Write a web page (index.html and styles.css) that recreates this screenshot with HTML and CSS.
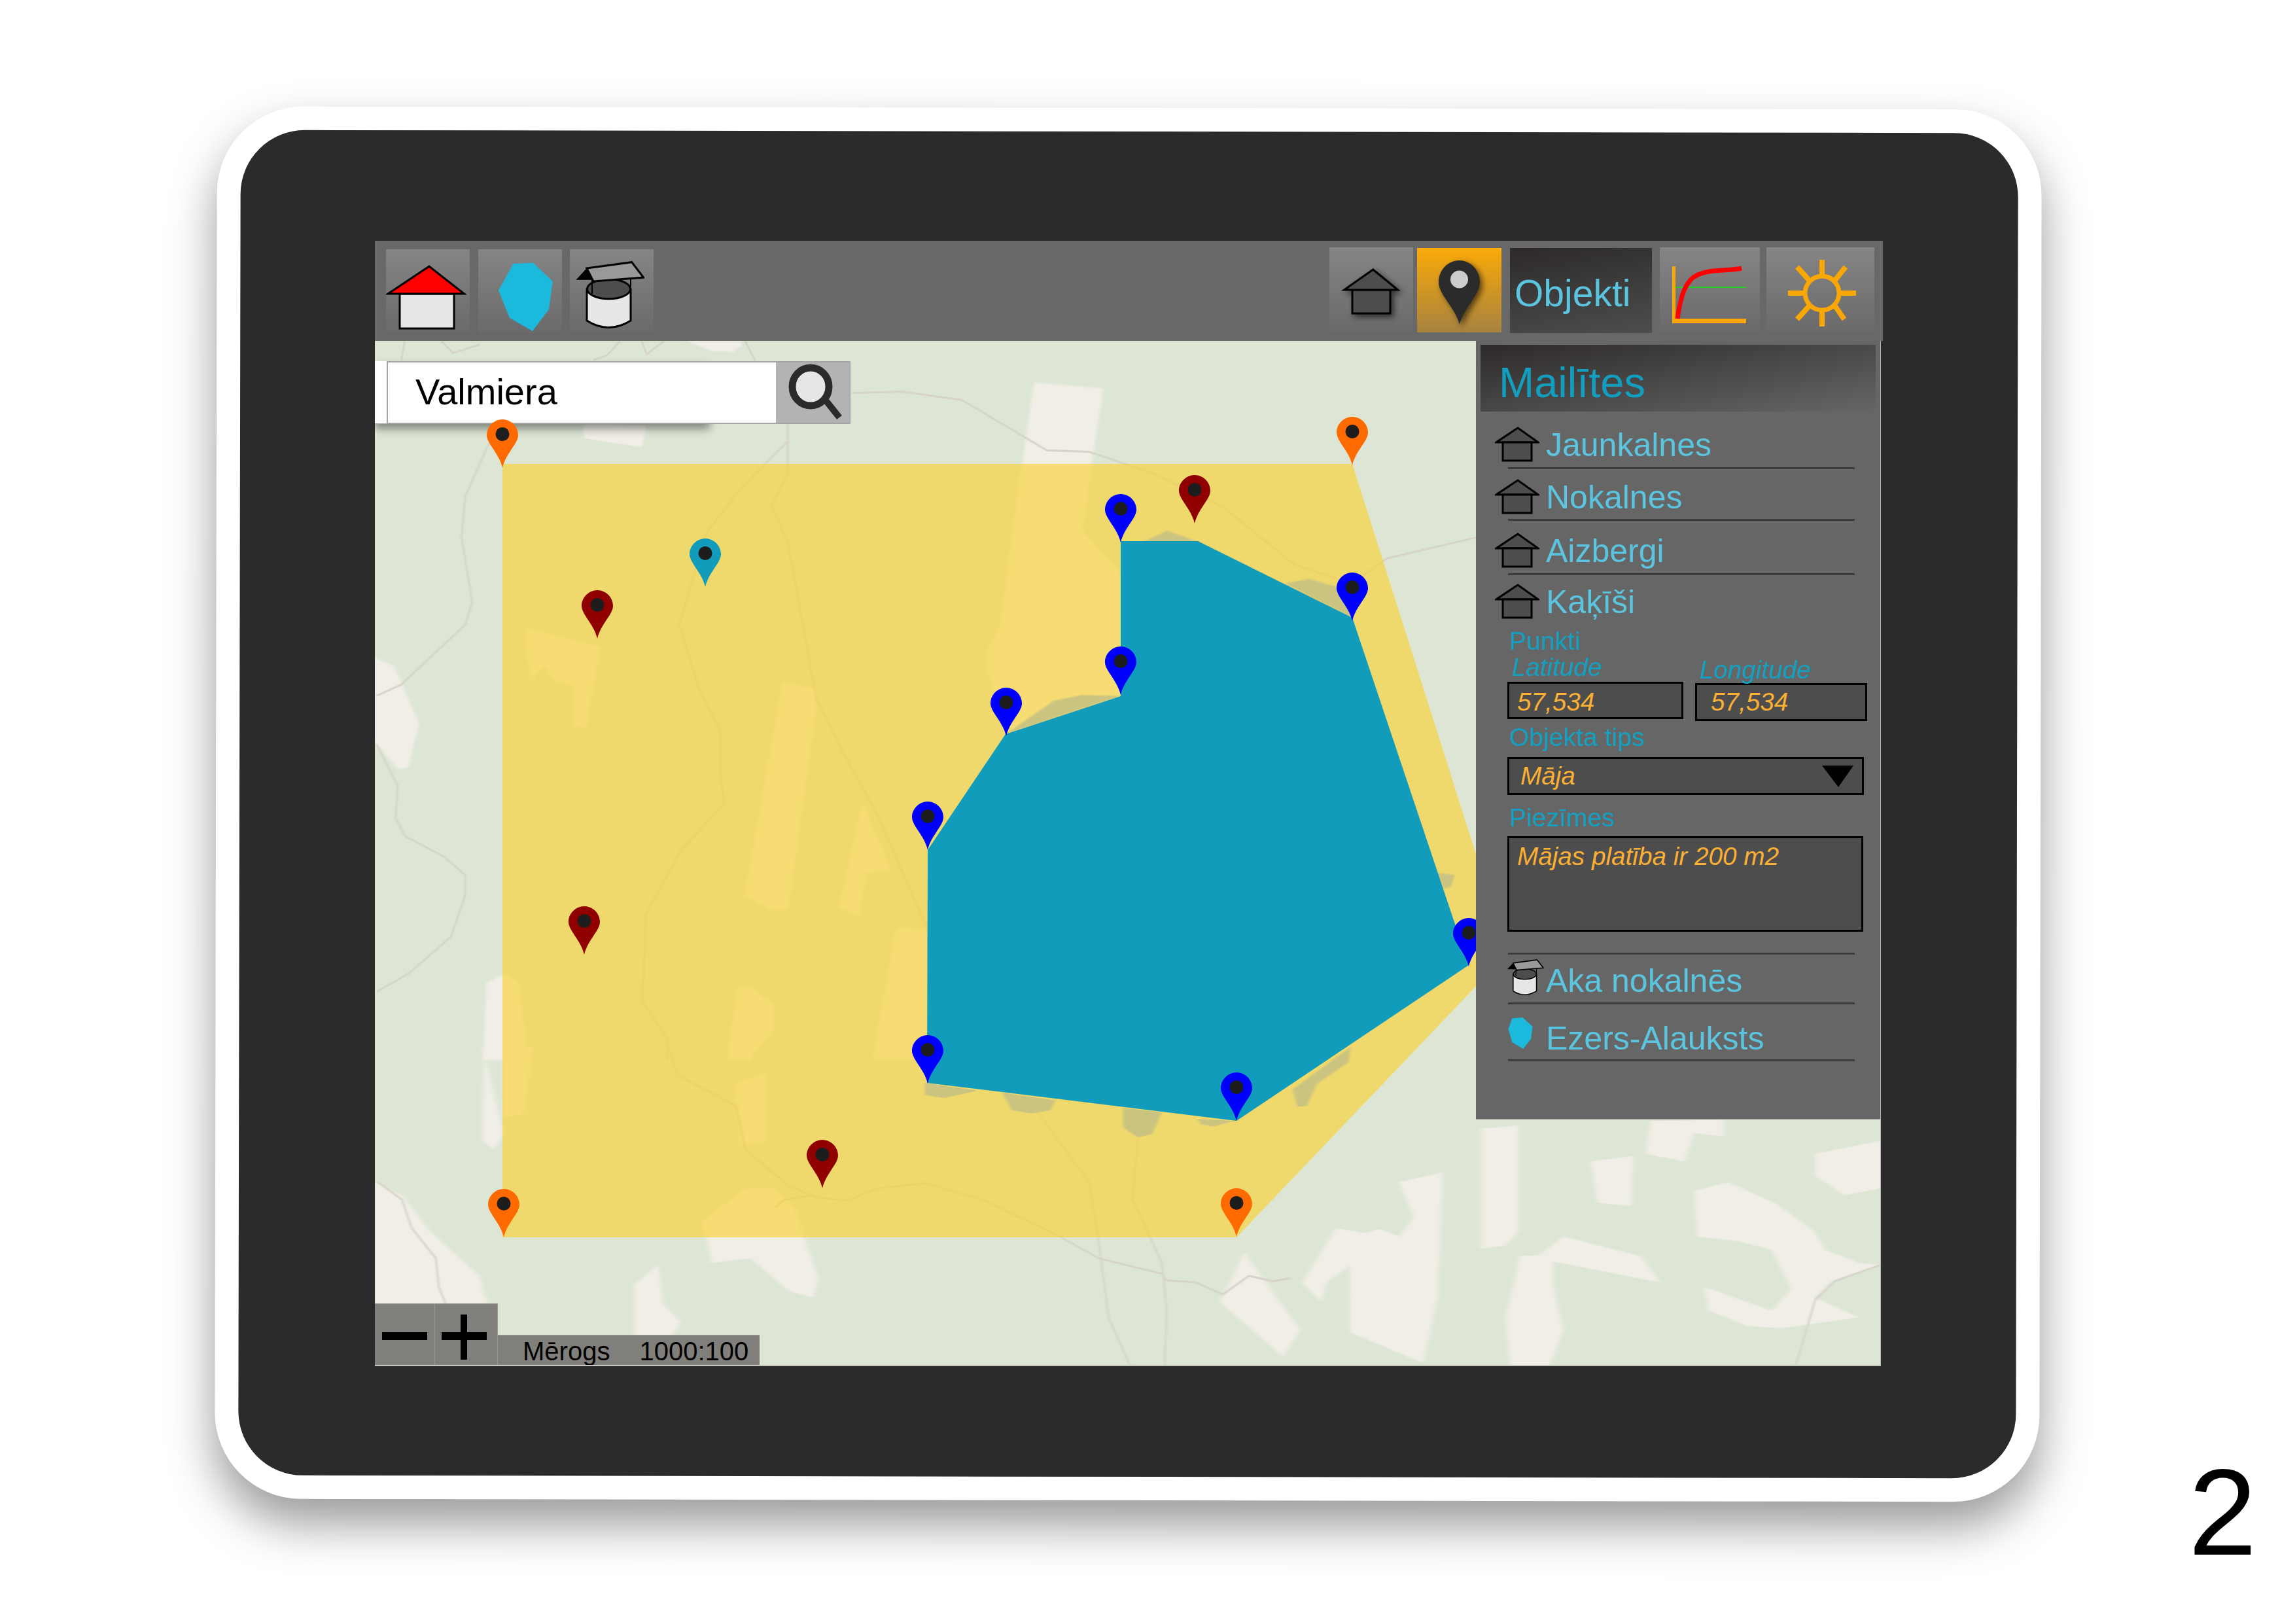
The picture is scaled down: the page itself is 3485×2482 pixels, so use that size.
FILE: index.html
```html
<!DOCTYPE html>
<html lang="en">

<head>
    <meta charset="UTF-8">
    <title>Mailītes</title>
    <link rel="stylesheet" href="styles.css">
</head>

<body>
    <svg class="defs" width="0" height="0">
        <symbol id="pin" viewBox="0 0 48 74">
            <path d="M24 0C37 0 48 11 48 24C48 37 29 52 24 74C19 52 0 37 0 24C0 11 11 0 24 0Z" />
            <circle cx="24" cy="22.500" r="10.500" fill="#1d1d1d" />
        </symbol>
        <symbol id="house" viewBox="0 0 68 54">
            <polygon points="35,2 2,24 66,24" fill="#4d4d4d" stroke="#000" stroke-width="3" />
            <rect x="12" y="24" width="44" height="28" fill="#4d4d4d" stroke="#000" stroke-width="3" />
        </symbol>
        <symbol id="well" viewBox="8 18 106 103">
            <path d="M26 61V109Q59 130 93 109V61Z" fill="#e6e6e6" stroke="#000" stroke-width="3" />
            <ellipse cx="59.500" cy="60.700" rx="33" ry="15" fill="#4d4d4d" stroke="#000" stroke-width="3" />
            <path d="M34 47V68M93 44V61" stroke="#000" stroke-width="2" fill="none" />
            <polygon points="25.800,29 9.400,46.700 36,46.700" fill="#000" />
            <polygon points="25.800,29 94.600,19.700 112.500,43 36,49" fill="#999" stroke="#000" stroke-width="3" />
        </symbol>
    </svg>

    <div class="tablet">
        <div class="bezel">
            <div class="screen">
                <div class="toolbar">
                    <div class="tool">
                        <svg width="128" height="128">
                            <rect x="21" y="68" width="83" height="53" fill="#e6e6e6" stroke="#000" stroke-width="3" />
                            <polygon points="66,26 3,68 119.500,68" fill="#f00" stroke="#000" stroke-width="3" />
                        </svg>
                    </div>
                    <div class="tool tool-lake">
                        <svg width="128" height="128">
                            <polygon points="53.500,22 84,20.700 113.700,49 108,91.700 83,125 48,105 31,63" fill="#1bb9dc" />
                        </svg>
                    </div>
                    <div class="tool">
                        <svg width="128" height="128" viewBox="0 0 128 128">
                            <use href="#well" x="8" y="18" width="106" height="103" />
                        </svg>
                    </div>

                    <div class="tool-right">
                        <div class="tool tool-home">
                            <svg class="soft" width="128" height="129">
                                <rect x="35" y="65" width="58" height="36" fill="#4d4d4d" stroke="#000" stroke-width="3" />
                                <polygon points="66.700,34 22.500,65 104.600,65" fill="#4d4d4d" stroke="#000" stroke-width="3" />
                            </svg>
                        </div>
                        <div class="tool tool-active">
                            <svg class="soft" width="129" height="129">
                                <path d="M64.500 19C82 19 96 34 96 52C96 72 72 90 65 117C58 90 33 72 33 52C33 34 47 19 64.500 19Z" fill="#2b2b2b" />
                                <ellipse cx="64.500" cy="48" rx="13.500" ry="13.500" fill="#ccc" />
                            </svg>
                        </div>
                        <div class="tool-title">Objekti</div>
                        <div class="tool tool-graph">
                            <svg width="153" height="129">
                                <rect x="19" y="29" width="5" height="87" fill="#f9a607" />
                                <rect x="19" y="109" width="113" height="7" fill="#f9a607" />
                                <rect x="24" y="60" width="108" height="2" fill="#2ec52e" />
                                <path d="M27 109C32 72 40 50 58 42C78 33 100 37 125 32" fill="none" stroke="#f00" stroke-width="7" />
                            </svg>
                        </div>
                        <div class="tool tool-sun">
                            <svg width="165" height="129" viewBox="-85 -70 165 129">
                                <circle r="26" fill="none" stroke="#f9a607" stroke-width="7" />
                                <path d="M0 -28V-51M0 28V51M-28 0H-52M28 0H52M-20 -20L-38 -40M20 -20L36 -40M-20 20L-38 40M20 20L34 40" stroke="#f9a607" stroke-width="8" fill="none" />
                            </svg>
                        </div>
                    </div>
                </div>

                <div class="map">
                    <svg class="map-layer" viewBox="573 521 2302 1567" width="2302" height="1567">
                        <rect x="573" y="521" width="2302" height="1567" fill="#dde6d5" />

                        <g class="land" transform="translate(570 520) scale(1.0842 .7015)">
                            <polygon points="932,92 1030,105 1010,300 1000,415 1054,510 1054,770 900,860 868,730 868,670 885,620 915,270" />
                            <polygon points="215,628 320,668 300,845 285,840 283,750 260,745 240,708 222,745" />
                            <polygon points="578,745 625,760 625,790 585,1240 560,1240 525,1210" />
                            <polygon points="690,1010 730,1155 695,1160 685,1255 658,1235" />
                            <polygon points="738,1280 781,1285 781,1568 705,1568" />
                            <polygon points="0,690 30,710 65,835 50,930 35,935 0,870" />
                            <polygon points="160,1400 185,1380 205,1400 218,1568 155,1568" />
                            <polygon points="515,1410 535,1410 565,1450 565,1500 530,1568 500,1568" />
                            <polygon points="300,180 385,190 378,232 298,208" />
                            <polygon points="440,0 520,0 510,25 480,22" />
                        </g>
                        <g class="land" transform="translate(570 1600) scale(1.4796 .3333)">
                            <polygon points="2,620 30,680 60,850 110,1050 118,1176 2,1176" />
                            <polygon points="113,0 135,0 135,320 155,310 165,0 115,0 113,430 125,470 135,400" />
                            <polygon points="340,800 385,650 415,650 435,740 460,1060 455,1150 430,1120 390,970 350,990" />
                            <polygon points="375,170 405,120 405,440 380,450" />
                            <polygon points="270,1090 295,1000 300,1180 318,1260 310,1320 318,1470 270,1470" />
                            <polygon points="875,1170 900,940 958,1300 940,1420" />
                            <polygon points="960,1080 995,830 1025,855 1040,835 1060,870 1075,780 1060,620 1105,575 1100,1150 1085,1450 1010,1310 1010,1000 985,1080 980,1170" />
                            <polygon points="1145,375 1183,360 1183,850 1170,910 1145,925" />
                            <polygon points="1320,340 1395,335 1395,410 1365,395 1355,525 1315,490" />
                            <polygon points="1258,525 1302,500 1300,730 1265,715" />
                            <polygon points="1170,1240 1185,960 1205,955 1230,870 1310,960 1330,1080 1220,985 1220,1110 1230,1300 1215,1470 1175,1470" />
                            <polygon points="1365,660 1400,620 1450,720 1490,850 1500,930 1535,990 1557,1000 1505,1080 1490,1150 1535,1240 1455,1290 1420,1280 1380,1210 1375,1100 1445,1210 1465,1110 1445,930 1410,890 1368,870" />
                            <polygon points="1490,490 1568,420 1568,640 1520,680 1490,590" />
                        </g>
                        <g class="land" transform="translate(560 350) scale(.5102 .3333)">
                            <polygon points="965,515 1040,560 1125,540 1120,515" />
                            <polygon points="650,900 835,900 825,1000 655,960" />
                        </g>

                        <g class="roads" transform="translate(570 520) scale(1.0842 .7015)">
                            <polyline points="585,180 585,290 562,360 585,440 625,780 660,890 710,1030 781,1280" />
                            <polyline points="585,220 520,320 470,420 432,620 460,760 490,850 490,940 495,1010 435,1110 385,1250 380,1440 415,1520 415,1568" />
                            <polyline points="675,115 745,112 830,130 950,240 1010,243 1100,290 1200,365 1300,490 1380,530 1430,475 1555,430" />
                            <polyline points="165,220 130,340 125,430 140,570 130,620 40,750 5,775" />
                            <polyline points="5,880 35,970 32,1040 45,1080 100,1125 130,1165 130,1210 110,1300 50,1380 5,1420" />
                        </g>
                        <g class="roads" transform="translate(570 1600) scale(1.4796 .3333)">
                            <polyline points="305,0 315,130 375,270 385,470 430,640 460,690 490,705 520,650 570,625 630,700 710,870 750,970 815,1040 820,1070 850,1080 878,1135 905,1050 930,1075 948,1060" />
                            <polyline points="415,738 425,700 455,680" />
                            <polyline points="675,230 740,620 750,900 760,1240 782,1460" />
                            <polyline points="790,420 785,700 815,990 820,1200 818,1460" />
                            <polyline points="5,620 30,700 40,830 65,970 68,1100 75,1176" />
                            <polyline points="1557,1000 1510,1075 1490,1160 1470,1460" />
                        </g>
                        <g class="roads" transform="translate(560 350) scale(.5102 .3333)">
                            <polyline points="115,515 105,600" />
                            <polyline points="225,515 260,568 340,530" />
                            <polyline points="825,515 840,575 890,515" />
                            <polyline points="760,515 720,580 680,600" />
                            <polyline points="1135,515 1165,605" />
                        </g>

                        <polygon class="area-yellow" points="768,709 2067,709 2304,1457 1890,1891 768,1891" />

                        <g class="dark-patch" transform="translate(570 520) scale(1.0842 .7015)">
                            <polygon points="1085,440 1120,415 1165,440" />
                            <polygon points="1285,530 1320,520 1365,540 1381,605" />
                            <polygon points="892,858 960,785 1000,773 1054,775" />
                            <polygon points="1500,1160 1525,1165 1520,1190 1510,1195" />
                        </g>
                        <g class="dark-patch" transform="translate(570 1600) scale(1.4796 .3333)">
                            <polygon points="570,165 625,200 590,235 570,220" />
                            <polygon points="650,210 705,245 700,290 680,305 660,290" />
                            <polygon points="775,280 815,300 805,400 790,415 775,370" />
                            <polygon points="852,330 890,340 868,365 855,355" />
                            <polygon points="1010,0 1008,70 975,170 965,270 955,275 950,195" />
                        </g>

                        <polygon class="area-blue" points="1713,827 1831,827 2067,944 2245,1475 1890,1713 1417,1655 1418,1299 1537,1122 1713,1064" />
                    </svg>

                    <div class="search-back"></div>
                    <div class="search">
                        <div class="search-text">Valmiera</div>
                        <div class="search-btn">
                            <svg width="112" height="92" viewBox="1187 554 112 92">
                                <line x1="1264" y1="613" x2="1284" y2="638" stroke="#2b2b2b" stroke-width="10" />
                                <ellipse cx="1240" cy="591" rx="28" ry="29" fill="#e6e6e6" stroke="#2b2b2b" stroke-width="11" />
                            </svg>
                        </div>
                    </div>

                    <svg class="map-layer" viewBox="573 521 2302 1567" width="2302" height="1567">
                        <use href="#pin" class="pin-orange" x="744" y="641" width="48" height="74" />
                        <use href="#pin" class="pin-orange" x="2043" y="637" width="48" height="74" />
                        <use href="#pin" class="pin-orange" x="746" y="1817" width="48" height="74" />
                        <use href="#pin" class="pin-orange" x="1866" y="1816" width="48" height="74" />
                        <use href="#pin" class="pin-maroon" x="1802" y="726" width="48" height="74" />
                        <use href="#pin" class="pin-maroon" x="889" y="902" width="48" height="74" />
                        <use href="#pin" class="pin-maroon" x="869" y="1385" width="48" height="74" />
                        <use href="#pin" class="pin-maroon" x="1233" y="1742" width="48" height="74" />
                        <use href="#pin" class="pin-teal" x="1054" y="823" width="48" height="74" />
                        <use href="#pin" class="pin-blue" x="1689" y="755" width="48" height="74" />
                        <use href="#pin" class="pin-blue" x="2043" y="875" width="48" height="74" />
                        <use href="#pin" class="pin-blue" x="1689" y="988" width="48" height="74" />
                        <use href="#pin" class="pin-blue" x="1514" y="1051" width="48" height="74" />
                        <use href="#pin" class="pin-blue" x="1394" y="1225" width="48" height="74" />
                        <use href="#pin" class="pin-blue" x="2221" y="1403" width="48" height="74" />
                        <use href="#pin" class="pin-blue" x="1394" y="1582" width="48" height="74" />
                        <use href="#pin" class="pin-blue" x="1866" y="1639" width="48" height="74" />
                    </svg>

                    <div class="panel">
                        <div class="panel-title">Mailītes</div>

                        <div class="row row-first">
                            <svg class="row-icon"><use href="#house" /></svg>
                            <span class="row-text">Jaunkalnes</span>
                        </div>
                        <hr class="rule">
                        <div class="row row-second">
                            <svg class="row-icon"><use href="#house" /></svg>
                            <span class="row-text">Nokalnes</span>
                        </div>
                        <hr class="rule">
                        <div class="row row-third">
                            <svg class="row-icon"><use href="#house" /></svg>
                            <span class="row-text">Aizbergi</span>
                        </div>
                        <hr class="rule">
                        <div class="row row-fourth">
                            <svg class="row-icon"><use href="#house" /></svg>
                            <span class="row-text">Kaķīši</span>
                        </div>

                        <div class="form">
                            <div class="label">Punkti</div>
                            <div class="coords">
                                <div class="coord-lat">
                                    <div class="label label-it">Latitude</div>
                                    <div class="field field-lat">57,534</div>
                                </div>
                                <div class="coord-lng">
                                    <div class="label label-it">Longitude</div>
                                    <div class="field field-lng">57,534</div>
                                </div>
                            </div>
                            <div class="label label-type">Objekta tips</div>
                            <div class="field field-select">
                                <span>Māja</span>
                                <svg class="select-arrow" width="48" height="33">
                                    <polygon points="0,0 48,0 25,33" fill="#000" />
                                </svg>
                            </div>
                            <div class="label label-notes">Piezīmes</div>
                            <div class="field field-notes">Mājas platība ir 200 m2</div>
                        </div>

                        <hr class="rule rule-form">
                        <div class="row row-well">
                            <svg class="row-icon-well" width="57" height="55" viewBox="8 18 106 103"><use href="#well" x="8" y="18" width="106" height="103" /></svg>
                            <span class="row-text">Aka nokalnēs</span>
                        </div>
                        <hr class="rule">
                        <div class="row row-lake">
                            <svg class="row-icon-lake" width="38" height="48" viewBox="134 1115 95 120">
                                <polygon points="150,1118 190,1115 228,1150 222,1197 192,1235 150,1210 135,1160" fill="#1bb9dc" />
                            </svg>
                            <span class="row-text">Ezers-Alauksts</span>
                        </div>
                        <hr class="rule">
                    </div>

                    <div class="controls">
                        <div class="zoom-btn zoom-minus">
                            <svg width="91" height="93"><rect x="11" y="43" width="69" height="12" fill="#000" /></svg>
                        </div>
                        <div class="zoom-btn zoom-plus">
                            <svg width="95" height="93">
                                <rect x="10" y="43" width="69" height="12" fill="#000" />
                                <rect x="39" y="16" width="10" height="69" fill="#000" />
                            </svg>
                        </div>
                        <div class="scale">
                            <span>Mērogs</span>
                            <span>1000:100</span>
                        </div>
                    </div>
                </div>
            </div>
        </div>
    </div>

    <div class="page-number">2</div>
</body>

</html>
```

FILE: styles.css
```css
body {
    margin: 0;
    width: 3485px;
    height: 2482px;
    overflow: hidden;
    background-color: #fff;
    font-family: "Liberation Sans", Arial, sans-serif;
    position: relative;
}

.defs {
    position: absolute;
}

svg {
    display: block;
}

.tablet {
    box-sizing: border-box;
    width: 2789px;
    height: 2128px;
    margin: 165px 0 0 330px;
    padding: 36px;
    background-color: #fff;
    border-radius: 132px;
    box-shadow: 0 38px 72px rgba(0, 0, 0, 0.4);
    transform: rotate(0.1deg);
}

.bezel {
    width: 100%;
    height: 100%;
    box-sizing: border-box;
    padding: 167px 0 0 207px;
    background-color: #2b2b2b;
    border-radius: 98px;
}

.screen {
    width: 2302px;
    height: 1720px;
    display: flex;
    flex-direction: column;
    transform: rotate(-0.1deg);
}

/* top bar */
.toolbar {
    box-sizing: border-box;
    height: 153px;
    width: 2305px;
    flex: none;
    display: flex;
    gap: 12px;
    padding: 13px 13px 0 17px;
    background-color: #686868;
}

.tool {
    width: 128px;
    height: 128px;
    background: linear-gradient(#858585, #6a6a6a);
}

.tool-lake {
    margin-left: 1px;
}

.tool-right {
    margin-left: auto;
    margin-top: -3px;
    display: flex;
}

.tool-home {
    height: 129px;
}

.tool-active {
    width: 129px;
    height: 129px;
    margin: 1px 0 0 6px;
    background: linear-gradient(#fbaa08, #a68240);
}

.tool-title {
    box-sizing: border-box;
    width: 217px;
    height: 130px;
    margin: 1px 0 0 13px;
    padding: 37px 0 0 7px;
    color: #5bc4df;
    font-size: 57px;
    line-height: 64px;
    background: linear-gradient(170deg, #2d2a29, #4d4d4d);
}

.tool-graph {
    width: 153px;
    height: 129px;
    margin-left: 12px;
}

.tool-sun {
    width: 165px;
    height: 129px;
    margin-left: 10px;
}

.soft {
    filter: drop-shadow(4px 4px 5px rgba(0, 0, 0, 0.6));
}

/* map */
.map {
    box-sizing: border-box;
    position: relative;
    height: 1567px;
    flex: none;
    overflow: hidden;
    border-bottom: 2px solid #c8c8c0;
    border-right: 1px solid #bbb;
}

.map-layer {
    position: absolute;
    left: 0;
    top: 0;
}

.land {
    fill: #f0eee6;
    filter: blur(2px);
}

.roads {
    filter: blur(1px);
}

.roads polyline {
    fill: none;
    stroke: #d6d4c8;
    stroke-width: 3px;
    vector-effect: non-scaling-stroke;
}

.area-yellow {
    fill: rgb(251, 208, 38);
    fill-opacity: 0.6;
}

.area-blue {
    fill: #129cbc;
}

.dark-patch {
    fill: #cbc480;
    filter: blur(1.500px);
}

.pin-orange {
    fill: #ff6a00;
}

.pin-maroon {
    fill: #910000;
}

.pin-blue {
    fill: #00f;
}

.pin-teal {
    fill: #129cbc;
}

/* search */
.search-back {
    position: absolute;
    left: 0;
    top: 31px;
    width: 512px;
    height: 95px;
    background-color: #fff;
    border-bottom: 1px solid #aaa;
    box-shadow: 0 8px 12px rgba(0, 0, 0, 0.4);
}

.search {
    box-sizing: border-box;
    position: absolute;
    left: 18px;
    top: 31px;
    width: 709px;
    height: 96px;
    display: flex;
    border: 2px solid #a5a5a5;
}

.search-text {
    width: 595px;
    box-sizing: border-box;
    padding: 13px 0 0 42px;
    background-color: #fff;
    color: #000;
    font-size: 56px;
    line-height: 64px;
}

.search-btn {
    flex: 1;
    background-color: #b3b3b3;
}

/* right panel */
.panel {
    box-sizing: border-box;
    position: absolute;
    right: 0;
    top: 0;
    width: 618px;
    height: 1190px;
    padding-top: 6px;
    background-color: #666;
    border-bottom: 1px solid #999;
}

.panel-title {
    box-sizing: border-box;
    height: 102px;
    margin: 0 7px;
    padding: 14px 0 0 28px;
    color: #139ebf;
    font-size: 65px;
    line-height: 88px;
    background: linear-gradient(170deg, #2d2a29, #666);
}

.row {
    display: flex;
    align-items: flex-start;
    margin-left: 29px;
}

.row-first {
    margin-top: 23px;
}

.row-second {
    margin-top: 15px;
}

.row-second + .rule {
    margin-top: 5px;
}

.row-third {
    margin-top: 18px;
}

.row-fourth {
    margin-top: 13px;
}

.row-icon {
    width: 68px;
    height: 54px;
    margin-right: 10px;
}

.row-text {
    color: #5bc4df;
    font-size: 50px;
    line-height: 56px;
}

.rule {
    box-sizing: border-box;
    width: 530px;
    height: 3px;
    margin: 6px 0 0 49px;
    border: 0;
    background-color: #3f3c3c;
}

.rule-form {
    margin-top: 32px;
}

.row-well {
    margin: 7px 0 0 47px;
}

.row-well .row-text {
    margin: 5px 0 0 3px;
}

.row-well + .rule {
    margin-top: 5px;
}

.row-lake {
    margin: 20px 0 0 49px;
}

.row-lake .row-text {
    margin: 4px 0 0 20px;
}

.row-lake + .rule {
    margin-top: 4px;
}

/* form */
.form {
    margin: 12px 0 0 48px;
}

.label {
    padding-left: 3px;
    color: #13a0c0;
    font-size: 39.200px;
    line-height: 39px;
}

.label:first-child {
    line-height: 40px;
}

.label-it {
    font-size: 38.700px;
    font-style: italic;
    padding-left: 7px;
}

.coords {
    display: flex;
    gap: 18px;
    height: 102px;
}

.coord-lng {
    padding-top: 4px;
}

.field {
    box-sizing: border-box;
    border: 3px solid #000;
    background-color: #4d4d4d;
    color: #fbb034;
    font-size: 38.700px;
    font-style: italic;
}

.field-lat {
    width: 269px;
    height: 57px;
    margin-top: 2px;
    padding: 2px 0 0 12px;
    line-height: 51px;
}

.field-lng {
    width: 263px;
    height: 58px;
    padding-left: 21px;
    line-height: 52px;
}

.label-type {
    margin-top: 5px;
}

.field-select {
    display: flex;
    align-items: center;
    width: 545px;
    height: 58px;
    margin-top: 11px;
    padding: 0 13px 0 17px;
    line-height: 52px;
}

.select-arrow {
    margin-left: auto;
}

.label-notes {
    margin-top: 15px;
}

.field-notes {
    width: 544px;
    height: 146px;
    margin-top: 9px;
    padding: 8px 0 0 12px;
    line-height: 40px;
}

/* zoom and scale */
.controls {
    position: absolute;
    left: 0;
    bottom: 0;
    display: flex;
    align-items: flex-end;
}

.zoom-btn {
    height: 93px;
    background-color: #807f7b;
    border-top: 1px solid #999;
}

.zoom-minus {
    width: 91px;
    border-right: 1px solid #999;
}

.zoom-plus {
    width: 95px;
    border-right: 1px solid #999;
}

.scale {
    box-sizing: border-box;
    display: flex;
    gap: 45px;
    width: 400px;
    height: 46px;
    padding: 1px 0 0 38px;
    color: #000;
    font-size: 40px;
    line-height: 46px;
    background-color: #807f7b;
    border-top: 1px solid #999;
}

.page-number {
    position: absolute;
    left: 3345px;
    top: 2217px;
    color: #000;
    font-size: 188px;
    line-height: 188px;
}
```
